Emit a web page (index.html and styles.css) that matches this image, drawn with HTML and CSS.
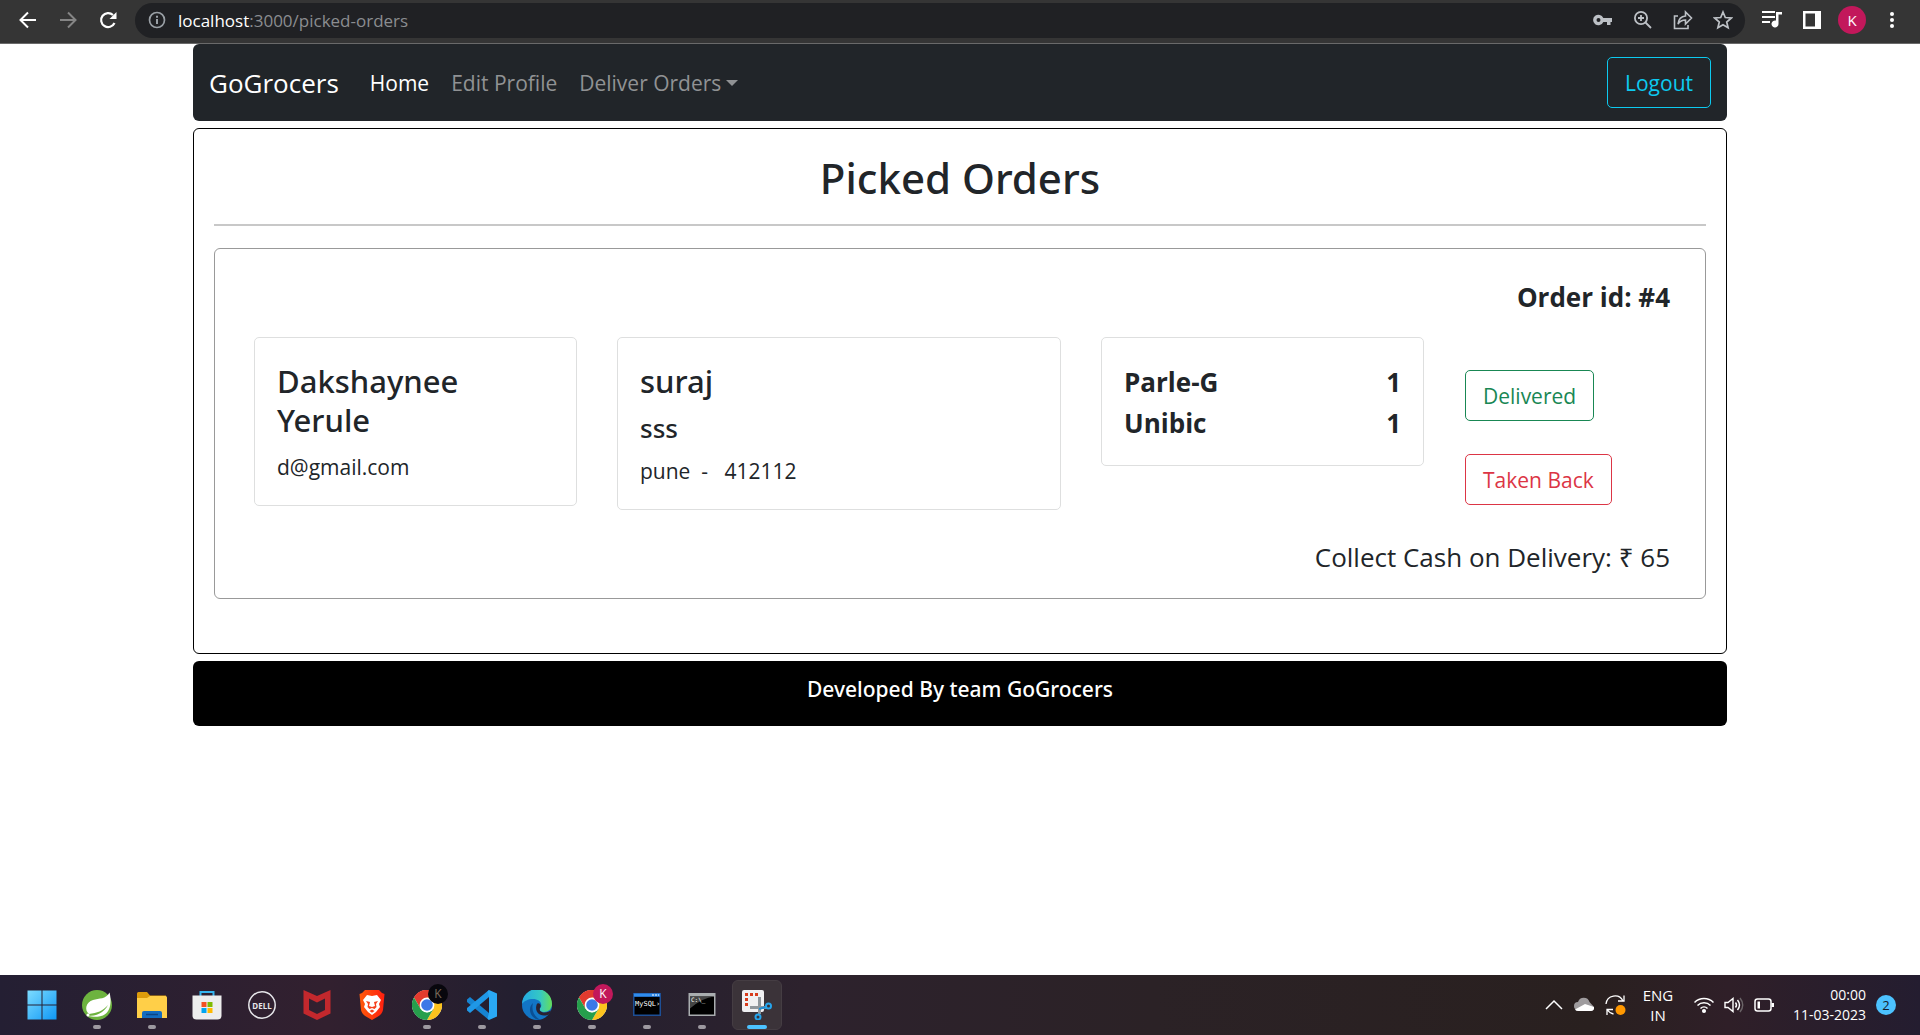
FILE: index.html
```html
<!DOCTYPE html>
<html lang="en">
<head>
<meta charset="utf-8">
<meta name="viewport" content="width=device-width, initial-scale=1">
<title>GoGrocers</title>
<link rel="stylesheet" href="styles.css">
</head>
<body>
<svg class="defs" aria-hidden="true">
  <defs>
    <symbol id="chrome" viewBox="0 0 30 30">
      <circle cx="15" cy="15" r="15" fill="#fff"/>
      <path d="M15 15 2.01 7.5A15 15 0 0 1 28 7.5H15z" fill="#ea4335"/>
      <path d="M15 0A15 15 0 0 0 2 7.5l6.5 11.3L15 8h13A15 15 0 0 0 15 0z" fill="#e33b2e"/>
      <path d="M28 7.5H15l6.5 11.2L15 30A15 15 0 0 0 28 7.5z" fill="#fcc31e"/>
      <path d="M2 7.5A15 15 0 0 0 15 30l6.5-11.2L15 22.500 8.500 18.800z" fill="#269f4c"/>
      <circle cx="15" cy="15" r="7.400" fill="#fff"/>
      <circle cx="15" cy="15" r="5.800" fill="#3b78e7"/>
    </symbol>
  </defs>
</svg>

<header class="browser">
  <button class="tool" aria-label="Back"><svg width="18" height="18" viewBox="0 0 18 18" fill="none" stroke="#fff" stroke-width="2"><path d="M17 9H2M9 1.500 1.500 9 9 16.500"/></svg></button>
  <button class="tool" aria-label="Forward"><svg width="18" height="18" viewBox="0 0 18 18" fill="none" stroke="#858585" stroke-width="2"><path d="M1 9h15M9 1.500 16.500 9 9 16.500"/></svg></button>
  <button class="tool" aria-label="Reload"><svg width="18" height="18" viewBox="0 0 18 18"><path d="M15.500 12A7 7 0 1 1 14 4" fill="none" stroke="#fff" stroke-width="2.200"/><path d="M17.500 1v7h-7z" fill="#fff"/></svg></button>
  <div class="omnibox">
    <svg width="18" height="18" viewBox="0 0 18 18" fill="none" stroke="#9aa0a6" stroke-width="2"><circle cx="9" cy="9" r="7.500" stroke-width="1.700"/><path d="M9 8v5M9 4.800v2"/></svg>
    <span class="url"><span class="host">localhost</span>:3000/picked-orders</span>
    <button class="tool" aria-label="Passwords"><svg width="20" height="20" viewBox="0 0 20 20"><path fill="#bdc1c6" fill-rule="evenodd" d="M10.300 8A5.300 5.300 0 1 0 10.300 12H14v3h3.500v-3H19V8zM5.500 8a2 2 0 1 1 0 4 2 2 0 0 1 0-4z"/></svg></button>
    <button class="tool" aria-label="Zoom"><svg width="20" height="20" viewBox="0 0 20 20" fill="none" stroke="#bdc1c6" stroke-width="1.800"><circle cx="8" cy="8" r="6.100"/><path d="M12.500 12.500 18 18M8 5v6M5 8h6" /></svg></button>
    <button class="tool" aria-label="Share"><svg width="20" height="20" viewBox="0 0 20 20" fill="none" stroke="#bdc1c6" stroke-width="1.600"><path d="M5 6H1.500v12.500H15V15M12.500 2v4C8 6.500 5.500 9 5 14c2-3 4-4 7.500-4v4L18.500 8z"/></svg></button>
    <button class="tool" aria-label="Bookmark"><svg width="20" height="20" viewBox="0 0 20 20" fill="none" stroke="#bdc1c6" stroke-width="1.700"><path d="m10 2 2.300 5.500 6 .5-4.600 4 1.400 5.800L10 14.700l-5.100 3.100L6.300 12 1.700 8l6-.5z"/></svg></button>
  </div>
  <button class="tool" aria-label="Media"><svg width="20" height="20" viewBox="0 0 20 20"><path d="M0 2h13M0 7h13M0 12h8" stroke="#fff" stroke-width="2"/><path d="M14 2h6v2.500h-3.500V14a3.500 3.500 0 1 1-2.500-3.400z" fill="#fff"/></svg></button>
  <button class="tool" aria-label="Side panel"><svg width="18" height="18" viewBox="0 0 18 18"><path fill="#fff" fill-rule="evenodd" d="M0 0h18v18H0zM2.500 2.500v13H12v-13z"/></svg></button>
  <button class="tool avatar" aria-label="Profile">K</button>
  <button class="tool" aria-label="Menu"><svg width="18" height="18" viewBox="0 0 18 18" fill="#fff"><circle cx="9" cy="3" r="2"/><circle cx="9" cy="9" r="2"/><circle cx="9" cy="15" r="2"/></svg></button>
</header>

<div class="page">
  <nav class="navbar">
    <a class="brand" href="#">GoGrocers</a>
    <a class="nav-link active" href="#">Home</a>
    <a class="nav-link" href="#">Edit Profile</a>
    <button class="nav-link caret">Deliver Orders</button>
    <button class="btn btn-info">Logout</button>
  </nav>

  <main class="panel">
    <h1 class="title">Picked Orders</h1>
    <hr class="rule">
    <section class="order">
      <p class="order-id">Order id: #4</p>
      <div class="row">
        <div class="card">
          <h2 class="name">Dakshaynee<br>Yerule</h2>
          <p class="text">d@gmail.com</p>
        </div>
        <div class="card">
          <h2 class="name">suraj</h2>
          <h3 class="street">sss</h3>
          <p class="text">pune&nbsp; -&nbsp;&nbsp; 412112</p>
        </div>
        <div class="card">
          <table class="items">
            <tr><th scope="row">Parle-G</th><td>1</td></tr>
            <tr><th scope="row">Unibic</th><td>1</td></tr>
          </table>
        </div>
        <div class="actions">
          <button class="btn btn-success">Delivered</button>
          <button class="btn btn-danger">Taken Back</button>
        </div>
      </div>
      <p class="collect">Collect Cash on Delivery: ₹ 65</p>
    </section>
  </main>

  <footer class="footer">Developed By team GoGrocers</footer>
</div>

<div class="taskbar">
  <div class="apps">
    <button class="app" aria-label="Start"><svg width="30" height="30" viewBox="0 0 30 30"><defs><linearGradient id="win" x1="0" y1="0" x2="1" y2="1"><stop offset="0" stop-color="#7ddcff"/><stop offset="1" stop-color="#0f97f5"/></linearGradient></defs><path fill="url(#win)" d="M.5.500h14v14H.5zM15.500.500h14v14h-14zM.5 15.500h14v14H.5zM15.500 15.500h14v14h-14z"/></svg></button>
    <button class="app open" aria-label="Spring Tools"><svg width="30" height="30" viewBox="0 0 30 30"><circle cx="15" cy="15" r="15" fill="#6db33f"/><path d="M27.500 2.500C30 12 29 25 17 26.500c-4 .5-8 0-11-.5 8 0 16-3 20-11-5 6-11 8-19 9C2 20 4 12 11 10c6-2 13-.5 16.500-7.500z" fill="#fff"/><circle cx="6" cy="25" r="1.500" fill="#fff"/></svg></button>
    <button class="app open" aria-label="File Explorer"><svg width="30" height="30" viewBox="0 0 30 30"><path d="M0 3.500A1.500 1.500 0 0 1 1.500 2H10l3 3.500h16V15H0z" fill="#dd9c0b"/><path d="M0 8h10l3-2h15.500A1.500 1.500 0 0 1 30 7.500V28H0z" fill="#ffcf48"/><path d="M5 28v-5a2 2 0 0 1 2-2h16a2 2 0 0 1 2 2v5z" fill="#126cc0"/><path d="M9 24.500h12" stroke="#0c4584" stroke-width="1.500"/></svg></button>
    <button class="app" aria-label="Store"><svg width="30" height="30" viewBox="0 0 30 30"><path d="M8.500 7V2h13v5" fill="none" stroke="#35b5ef" stroke-width="2"/><path d="M.5 5.500h29v20a4 4 0 0 1-4 4h-21a4 4 0 0 1-4-4z" fill="#ededed"/><path fill="#f25022" d="M9.500 12h5v5h-5z"/><path fill="#7fba00" d="M15.500 12h5v5h-5z"/><path fill="#00a4ef" d="M9.500 18h5v5h-5z"/><path fill="#ffb900" d="M15.500 18h5v5h-5z"/></svg></button>
    <button class="app" aria-label="Dell"><svg width="30" height="30" viewBox="0 0 30 30"><circle cx="15" cy="15" r="13.200" fill="none" stroke="#e6e6ea" stroke-width="1.500"/><text x="15" y="18.500" class="dell" text-anchor="middle">DELL</text></svg></button>
    <button class="app" aria-label="McAfee"><svg width="30" height="30" viewBox="0 0 30 30"><path fill="#c3282d" fill-rule="evenodd" d="M1.500 0 15 6l13.500-6v23.500L15 30 1.500 23.500zM7 8.500v11.500l8 4 8-4V8.500l-8 4z"/></svg></button>
    <button class="app" aria-label="Brave"><svg width="30" height="30" viewBox="0 0 30 30"><defs><linearGradient id="brv"><stop offset="0" stop-color="#ff5a0a"/><stop offset="1" stop-color="#ff1f0f"/></linearGradient></defs><path d="m8 0h14l3 3 2.500 1L26 20q-1 4-5 6.500L15 30l-6-3.500Q5 24 4 20L2.500 4 5 3z" fill="url(#brv)"/><path d="m10 5 5 1 5-1 4 5-2 4 1 3-4 5-4 3-4-3-4-5 1-3-2-4z" fill="#fff"/><path d="m9 11 4 1-1 4 3 1 3-1-1-4 4-1-2 3 .5 3-2 2-2.500-1-2.500 1-2-2L11 14zM12.500 21l2.500-1.500 2.500 1.500-2.500 1.800z" fill="#f6401c"/></svg></button>
    <button class="app open" aria-label="Chrome"><svg width="30" height="30"><use href="#chrome"/></svg><span class="badge dark">K</span></button>
    <button class="app open" aria-label="Visual Studio Code"><svg width="30" height="30" viewBox="0 0 30 30"><path d="m0 9.500 3-2.500 19 16v7L0 12z" fill="#1684d2"/><path d="M0 20.500 3 23 22 7V0L0 18z" fill="#1f97e6"/><path d="m22 0 8 3.500v23L22 30l-1.500-1.500L22 23V7l-1.500-5.500z" fill="#2aa9f4"/></svg></button>
    <button class="app open" aria-label="Edge"><svg width="30" height="30" viewBox="0 0 30 30"><defs><linearGradient id="edg"><stop offset="0" stop-color="#23a9e3"/><stop offset=".6" stop-color="#35c8c4"/><stop offset="1" stop-color="#66de58"/></linearGradient></defs><circle cx="15" cy="15" r="15" fill="#1275c5"/><path d="M0 14A15 15 0 0 1 30 14c0 5-4 8-8 8-5 0-5-3-3-5 1.500-5-3-8-8-8S2 11 0 14z" fill="url(#edg)"/><path d="M11 13c-2 7 1 14 8 17-11 0-14-12-8-17z" fill="#0b4f94"/><path d="M18.500 17c-2 3 0 5.500 4 5.500 3 0 5-1 7-2.500l-2 4C21 28 12 24 14.500 15c.5-3 5-2 4 2z" fill="#2a2230"/></svg></button>
    <button class="app open" aria-label="Chrome profile K"><svg width="30" height="30"><use href="#chrome"/></svg><span class="badge">K</span></button>
    <button class="app open" aria-label="MySQL"><svg width="30" height="30" viewBox="0 0 30 30"><path d="M1 3h28v23H1z" fill="#1d4f96"/><path d="M2.500 7h25v17.500h-25z" fill="#000"/><path d="M2 3.500h26v3H2z" fill="#2f8cec"/><path d="M20 5h7" stroke="#fff" stroke-dasharray="2 1"/><text x="3" y="15.500" class="term">MySQL›</text></svg></button>
    <button class="app open" aria-label="Command Prompt"><svg width="30" height="30" viewBox="0 0 30 30"><path d="M1.500 3h27v23h-27z" fill="#a9adaf"/><path d="M3 6.500h24v18H3z" fill="#000"/><path d="M3 6.500h24q-11 1-24 12z" fill="#454545"/><text x="4" y="12" class="prompt">C:\_</text></svg></button>
    <button class="app open current" aria-label="Snipping Tool"><svg width="30" height="30" viewBox="0 0 30 30"><rect width="22" height="22" rx="2" fill="#f0f0f2"/><path d="M3 4.500h13" stroke="#d83b1c" stroke-width="3" stroke-dasharray="3 2"/><path d="M4.500 3v14" stroke="#d83b1c" stroke-width="3" stroke-dasharray="3 2"/><path d="M17.500 7v17M8 17.500h17" stroke="#8f969c" stroke-width="3"/><path d="m17 19 7-2" stroke="#1f8fd6" stroke-width="2"/><g fill="none" stroke="#25a4ec" stroke-width="2"><circle cx="26.500" cy="16" r="2.500"/><circle cx="16" cy="27" r="2.500"/></g></svg></button>
  </div>
  <div class="tray">
    <button class="tray-item" aria-label="Hidden icons"><svg width="20" height="20" viewBox="0 0 20 20" fill="none" stroke="#fff" stroke-width="1.500"><path d="m2 14 8-8 8 8"/></svg></button>
    <button class="tray-item" aria-label="OneDrive"><svg width="20" height="20" viewBox="0 0 20 20"><path d="M4 15a4 4 0 0 1 0-8 6 6 0 0 1 11.500 0L20 12z" fill="#9f9c9e"/><path d="M1 14.500 11 9l9 3a3 3 0 0 1-3 4H4q-2 0-3-1.500z" fill="#fff"/></svg></button>
    <button class="tray-item" aria-label="Update"><svg width="22" height="22" viewBox="0 0 22 22"><path d="M2 10a9 9 0 0 1 17-3M20 1.500V7h-6M3 21v-5.500h6M3.500 16a9 9 0 0 0 6 4" fill="none" stroke="#fff" stroke-width="1.300"/><circle cx="16.500" cy="16" r="5" fill="#ff9800"/></svg></button>
    <button class="tray-item lang">ENG<br>IN</button>
    <button class="tray-item" aria-label="Wi-Fi"><svg width="20" height="20" viewBox="0 0 20 20" fill="none" stroke="#fff" stroke-width="1.500"><path d="M.5 7.500a13.500 13.500 0 0 1 19 0M3.500 10.500a9.200 9.200 0 0 1 13 0M6.500 13.500a5 5 0 0 1 7 0"/><circle cx="10" cy="16" r="1.300" fill="#fff"/></svg></button>
    <button class="tray-item" aria-label="Volume"><svg width="20" height="20" viewBox="0 0 20 20" fill="none" stroke="#fff" stroke-width="1.400"><path d="M1 7.500v5h3l5 4v-13l-5 4zM11.500 7.500q2 2.500 0 5M13.500 5q4 5 0 10"/><path d="M16 3q5.500 7 0 14" stroke="#6b6468"/></svg></button>
    <button class="tray-item" aria-label="Battery"><svg width="20" height="20" viewBox="0 0 20 20"><rect x="1" y="4" width="16" height="12" rx="2.500" fill="none" stroke="#fff" stroke-width="1.500"/><path d="M3.500 6.500H6v7H3.500zM17.500 8H20v4h-2.500z" fill="#fff"/></svg></button>
    <button class="tray-item clock">00:00<br>11-03-2023</button>
    <span class="count">2</span>
  </div>
</div>
</body>
</html>
```
FILE: styles.css
```css
* { box-sizing: border-box; }

body {
  margin: 0;
  min-height: 100vh;
  display: flex;
  flex-direction: column;
  background: #fff;
  color: #212529;
  font-family: "Open Sans", "Noto Sans", sans-serif;
  font-size: 21px;
  line-height: 33px;
}

h1, h2, h3, p { margin: 0; }
button { font: inherit; color: inherit; background: none; border: 0; padding: 0; }
svg { display: block; flex: none; }
.defs { position: absolute; width: 0; height: 0; }

/* Browser toolbar */
.browser {
  display: flex;
  align-items: center;
  height: 44px;
  padding: 0 8px 3px;
  background: #353535;
  border-bottom: 1px solid #6a6a6a;
}
.tool { display: flex; align-items: center; justify-content: center; width: 40px; height: 35px; flex: none; }
.omnibox {
  display: flex;
  align-items: center;
  flex: 1;
  height: 35px;
  margin: 0 7px;
  padding: 0 2px 0 13px;
  border-radius: 18px;
  background: #202124;
}
.url { flex: 1; margin-left: 12px; font-size: 17px; color: #8b8d90; }
.host { color: #fff; }
.avatar { width: 28px; height: 28px; margin: 0 6px; border-radius: 50%; background: #c2185b; color: #fff; font-size: 15px; }

/* Page */
.page { flex: 1; width: 94%; max-width: 1534px; margin: 0 auto; }

.navbar {
  display: flex;
  align-items: center;
  padding: 13px 16px;
  border-radius: 6px;
  background: #212529;
}
.brand { margin-right: 20px; padding-top: 2px; font-size: 26px; color: #fff; text-decoration: none; }
.nav-link { padding: 1px 11px 0; color: #909294; text-decoration: none; }
.nav-link.active { color: #fff; }
.caret { display: flex; align-items: center; gap: 5px; }
.caret::after { content: ""; border: 6px solid transparent; border-top-color: currentColor; border-bottom: 0; }
.navbar .btn { margin-left: auto; }

.btn { height: 51px; padding: 1px 17px 0; border: 1px solid currentColor; border-radius: 5px; }
.btn-info { color: #0dcaf0; }
.btn-success { color: #198754; }
.btn-danger { color: #dc3545; }

.title, .name, .street, .footer { font-family: "Noto Sans", "Open Sans", sans-serif; font-weight: 500; }

.panel { margin-top: 7px; padding: 22px 20px 54px; border: 1px solid #000; border-radius: 6px; }
.title { font-size: 42px; line-height: 53px; text-align: center; }
.rule { height: 2px; margin: 20px 0 22px; border: 0; background: #c8c8c8; }

.order { padding: 28px 19px 20px; border: 1px solid #999; border-radius: 6px; }
.order-id { padding-right: 16px; font-size: 26px; line-height: 41px; font-weight: 700; text-align: right; }
.row { display: grid; grid-template-columns: 3fr 4fr 3fr 2fr; align-items: start; margin-top: 19px; }
.card { margin: 0 20px; padding: 24px 22px 21px; border: 1px solid #dedfdf; border-radius: 5px; }
.name { margin-bottom: 11px; font-size: 31px; line-height: 39px; }
.street { margin-bottom: 10px; font-size: 26px; line-height: 33px; }
.items { width: 100%; border-collapse: collapse; font-size: 26px; line-height: 41px; font-weight: 700; }
.items th, .items td { padding: 0; text-align: left; }
.items td { text-align: right; }
.actions { display: flex; flex-direction: column; align-items: flex-start; gap: 33px; margin-left: 21px; padding-top: 33px; }
.collect { margin-top: 27px; padding-right: 16px; font-size: 26px; line-height: 41px; text-align: right; }

.footer { margin-top: 7px; padding: 12px 16px 20px; border-radius: 6px; background: #000; color: #fff; text-align: center; }

/* Taskbar */
.taskbar {
  display: flex;
  justify-content: space-between;
  height: 60px;
  background: linear-gradient(90deg, #241f33 0%, #32202f 17%, #231f30 27%, #2d222d 42%, #2b2226 60%, #29201f 83%, #2f1f28 90%, #241d30 100%);
  color: #fff;
}
.apps { display: flex; align-items: center; gap: 5px; padding-left: 17px; }
.app { position: relative; display: flex; align-items: center; justify-content: center; width: 50px; height: 50px; border-radius: 6px; }
.open::after { content: ""; position: absolute; bottom: 1px; left: 21px; width: 8px; height: 4px; border-radius: 2px; background: #9d99a0; }
.current { background: #3b3339; border: 1px solid #453d43; }
.current::after { bottom: 0; left: 14px; width: 20px; background: #4cc2ff; }
.badge { position: absolute; top: 4px; right: 4px; width: 20px; height: 20px; border-radius: 50%; background: #c2185b; font-size: 12px; line-height: 20px; }
.badge.dark { background: #08070d; color: #7b6c5c; }
.dell { font: 700 8px "Noto Sans", sans-serif; fill: #e6e6ea; }
.term { font: 7px "DejaVu Sans Mono", monospace; fill: #fff; }
.prompt { font: 6px "DejaVu Sans Mono", monospace; fill: #fff; }

.tray { display: flex; align-items: center; gap: 10px; padding-right: 24px; font-size: 14px; line-height: 20px; }
.lang { width: 44px; margin-right: 4px; font-size: 15px; text-align: center; }
.clock { width: 82px; text-align: right; }
.count { width: 20px; height: 20px; border-radius: 50%; background: #4cc2ff; color: #17202b; font-size: 13px; text-align: center; }
```
